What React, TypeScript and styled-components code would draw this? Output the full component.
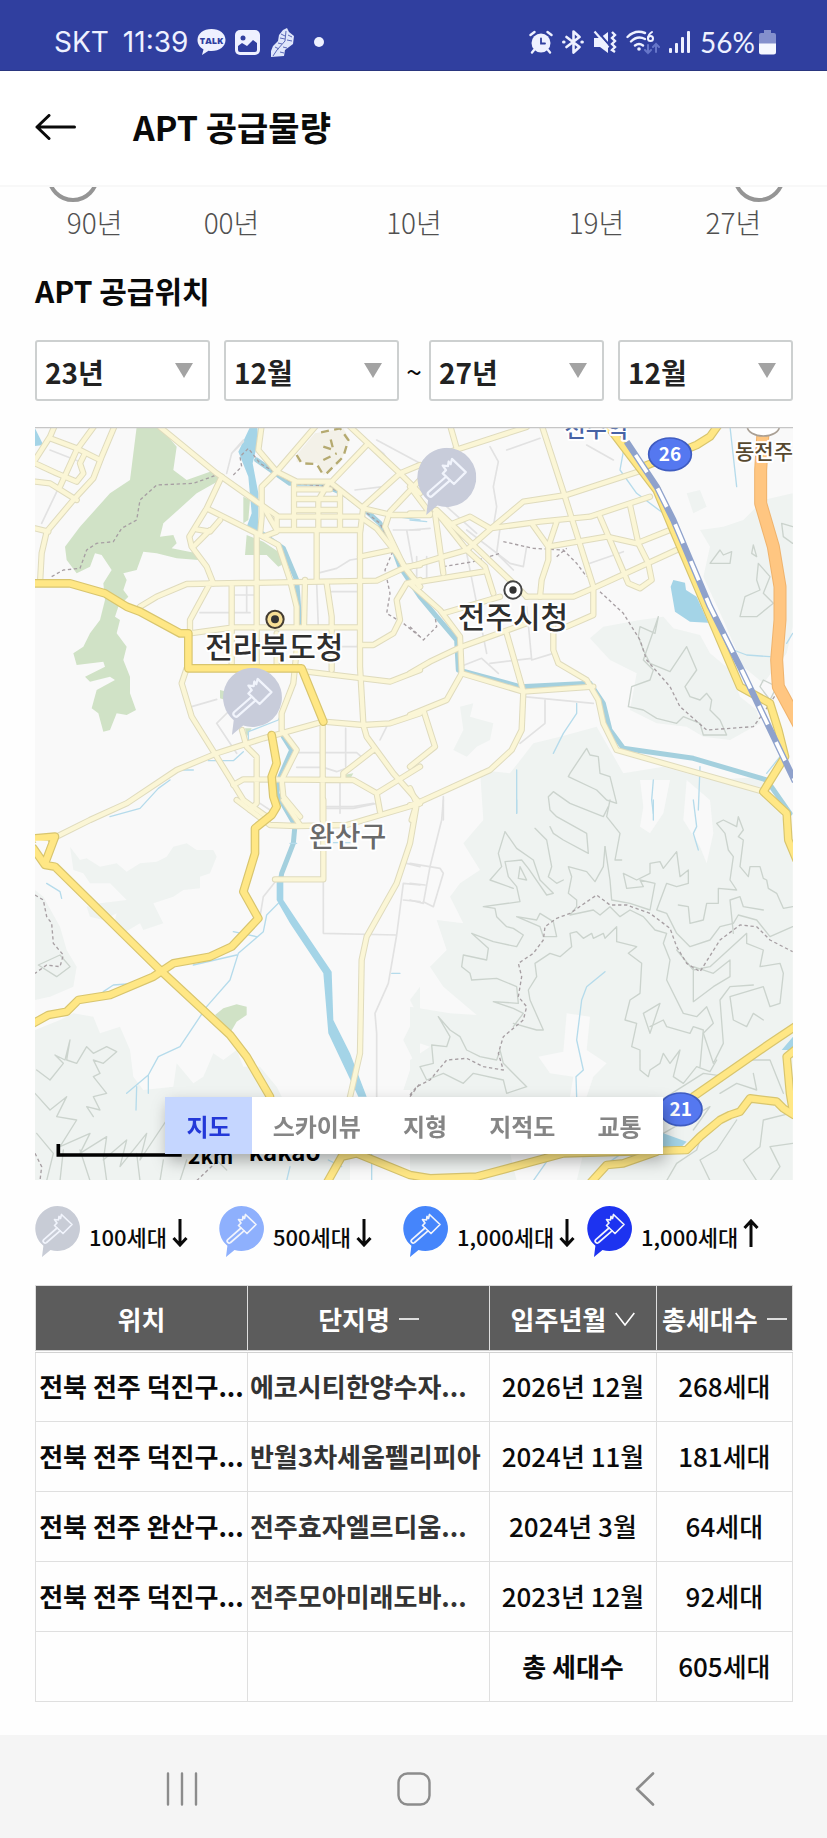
import React, { useState } from "react";
import styled, { createGlobalStyle } from "styled-components";

const GlobalStyle = createGlobalStyle`
  * { box-sizing: border-box; }
  body {
    margin: 0;
    background: #fefefe;
    color: #0a0a0a;
    font-family: "Noto Sans CJK KR", "Noto Sans", sans-serif;
  }
  button, select, input { font-family: inherit; }
`;

const Page = styled.div`
  display: flex;
  flex-direction: column;
  min-height: 100vh;
`;

/* ---------- status bar ---------- */

const StatusBar = styled.div`
  display: flex;
  align-items: center;
  justify-content: space-between;
  height: 71px;
  padding: 14px 51px 0 54px;
  background: #303f9f;
  border-bottom: 1px solid #2a367f;
  color: #eef1ff;
`;

const StatusGroup = styled.div<{ $gap: number }>`
  display: flex;
  align-items: center;
  gap: ${(p) => p.$gap}px;
`;

const StatusText = styled.span<{ $narrow?: boolean }>`
  font-family: ${(p) => (p.$narrow ? "Lato" : "Inter")}, "Noto Sans", sans-serif;
  font-size: 28px;
  line-height: 28px;
  white-space: nowrap;
`;

const TalkIcon = () => (
  <svg width="29" height="28" viewBox="0 0 29 28" aria-hidden="true">
    <path d="M14.5 1C6.5 1 .5 5.600 .5 12c0 4.200 2.500 7.500 6 9.400L5 27l6.500-4.300c1 .2 2 .3 3 .3 8 0 14-4.600 14-11S22.500 1 14.500 1z" fill="#eef1ff" />
    <text x="14.500" y="16" textAnchor="middle" fontSize="9" fontWeight="800" fontFamily="Open Sans, sans-serif" fill="#303f9f">TALK</text>
  </svg>
);

const PhotoIcon = () => (
  <svg width="25" height="25" viewBox="0 0 25 25" aria-hidden="true">
    <rect width="25" height="25" rx="5" fill="#eef1ff" />
    <circle cx="8" cy="8" r="2.500" fill="#303f9f" />
    <path d="M3 16l4-3 5 3 6-6 4 3v7q0 2-2 2H5q-2 0-2-2z" fill="#303f9f" />
  </svg>
);

const ShoeIcon = () => (
  <svg width="26" height="31" viewBox="0 0 26 31" aria-hidden="true">
    <path d="M14 3l4-2 2 4 5 4-1 8-8 6-1 6-13 1 0-6 2-5 5-5 1-6z" fill="#dfe6fb" />
    <path d="M17 4l-1 10-8 9-4 6M12 7l4 2M11 11l5 1M19 8l4 2M18 13l5 1M9 16l4 1M6 20l4 2M14 20l4 1M11 25l4 1" stroke="#5a68b8" strokeWidth="1" fill="none" />
  </svg>
);

const Dot = styled.span`
  width: 10px;
  height: 10px;
  margin-left: 10px;
  border-radius: 50%;
  background: #eef1ff;
`;

const AlarmIcon = () => (
  <svg width="24" height="24" viewBox="0 0 24 24" fill="none" stroke="#eef1ff" strokeWidth="2.400" strokeLinecap="round" aria-hidden="true">
    <circle cx="12" cy="13" r="9.500" fill="#eef1ff" stroke="none" />
    <path d="M1.500 5l4-3M22.500 5l-4-3M5 20l-2 2.500M19 20l2 2.500" />
    <path d="M12 8.500v5h4" stroke="#303f9f" strokeWidth="1.800" />
  </svg>
);

const BluetoothIcon = () => (
  <svg width="22" height="24" viewBox="0 0 22 24" fill="none" stroke="#eef1ff" strokeWidth="2.600" strokeLinejoin="round" strokeLinecap="round" aria-hidden="true">
    <path d="M4.500 7l13 10-6 5.500v-21l6 5.500-13 10" />
    <path d="M1.500 12h.6M19.800 12h.6" strokeWidth="3" />
  </svg>
);

const MuteIcon = () => (
  <svg width="24" height="24" viewBox="0 0 24 24" aria-hidden="true">
    <path d="M1 8h6l8-6v21l-8-6H1z" fill="#eef1ff" />
    <path d="M4 1l14 16" stroke="#303f9f" strokeWidth="2" />
    <path d="M1.500 1.500l14 16" stroke="#eef1ff" strokeWidth="2.200" />
    <path d="M19 2l3 3-3 3 3 3-3 3 3 3-3 3 3 2" fill="none" stroke="#eef1ff" strokeWidth="2.400" />
  </svg>
);

const WifiIcon = () => (
  <svg width="34" height="25" viewBox="0 0 34 25" fill="none" strokeLinecap="round" aria-hidden="true">
    <g stroke="#eef1ff" strokeWidth="2.400">
      <path d="M1.500 7C7 1.500 13 .8 19 3M5 11.500c4-4 9-5 14-2.500M9 15.500c2.500-2 5.500-2 8 0" />
      <path d="M26 2c-3 2-4 4-4 6.500" strokeWidth="2" />
      <circle cx="24.500" cy="8.500" r="2.500" strokeWidth="2" />
    </g>
    <circle cx="13" cy="19" r="1.800" fill="#eef1ff" />
    <path d="M22 15v8m-3-3l3 3 3-3M30 22v-8m-3 3l3-3 3 3" stroke="#6676c9" strokeWidth="2" />
  </svg>
);

const SignalIcon = () => (
  <svg width="22" height="24" viewBox="0 0 22 24" fill="#eef1ff" aria-hidden="true">
    <rect x="0" y="18" width="3" height="5" rx="1" />
    <rect x="6" y="13" width="3" height="10" rx="1" />
    <rect x="12" y="7" width="3" height="16" rx="1" />
    <rect x="18" y="1" width="3" height="22" rx="1" />
  </svg>
);

const BatteryIcon = () => (
  <svg width="17" height="25" viewBox="0 0 17 25" aria-hidden="true">
    <path d="M5 0h7v3h3q2 0 2 2v9H0V5q0-2 2-2h3z" fill="#8490cd" />
    <path d="M0 13.500h17V22q0 2.500-2.500 2.500h-12Q0 24.500 0 22z" fill="#f5f7ff" />
  </svg>
);

/* ---------- app bar ---------- */

const AppBar = styled.header`
  display: flex;
  align-items: center;
  gap: 57px;
  height: 116px;
  padding: 0 35px 2px;
  background: #fff;
  border-bottom: 2px solid #f8f8f8;
`;

const BackButton = styled.button`
  display: flex;
  padding: 0;
  border: 0;
  background: none;
`;

const Title = styled.h1`
  margin: 0;
  font-size: 34px;
  line-height: 50px;
  font-weight: 700;
`;

/* ---------- content ---------- */

const Content = styled.main`
  padding: 0 34px 33px 35px;
`;

const SliderStrip = styled.div`
  display: flex;
  align-items: flex-end;
  justify-content: space-between;
  height: 15px;
  padding: 0 8px 0 12px;
  overflow: hidden;
`;

const YearThumb = styled.input`
  appearance: none;
  flex: 0 1 50%;
  min-width: 0;
  height: 52px;
  margin: 0;
  background: none;
  &::-webkit-slider-thumb {
    appearance: none;
    width: 52px;
    height: 52px;
    border: 4px solid #959595;
    border-radius: 50%;
    background: #fff;
  }
`;

const YearScale = styled.div`
  display: grid;
  grid-template-columns: 1fr 2fr 2fr 2fr 1fr;
  padding: 0 14px;
  color: #505050;
  font-size: 28px;
  line-height: 40px;
  font-weight: 300;
  text-align: center;
`;

const SectionTitle = styled.h2`
  margin: 28px 0 30px;
  font-size: 30px;
  line-height: 40px;
  font-weight: 700;
`;

const FilterRow = styled.div`
  display: flex;
  align-items: center;
`;

const FilterPair = styled.div`
  flex: 1;
  display: flex;
  gap: 14px;
`;

const Tilde = styled.span`
  width: 30px;
  font-size: 28px;
  line-height: 28px;
  text-align: center;
`;

const SelectBox = styled.label`
  flex: 1;
  display: flex;
  align-items: center;
  min-width: 0;
  height: 61px;
  padding-right: 15px;
  border: 2px solid #cdd0d0;
  border-radius: 3px;
  background: #fff;
`;

const Select = styled.select`
  appearance: none;
  flex: 1;
  min-width: 0;
  height: 100%;
  padding: 2px 0 0 8px;
  border: 0;
  background: none;
  color: #222;
  font-size: 28px;
  font-weight: 700;
`;

const Caret = styled.span`
  border-left: 9px solid transparent;
  border-right: 9px solid transparent;
  border-top: 15px solid #a3a3a3;
`;

/* ---------- map ---------- */

const MapFrame = styled.section`
  position: relative;
  margin-top: 26px;
`;

const MapSvg = styled.svg`
  display: block;
  width: 100%;
  height: auto;
  background: #f9f9f9;
`;

const MapTabs = styled.div`
  position: absolute;
  right: 0;
  bottom: 26px;
  left: 0;
  display: flex;
  justify-content: center;
  filter: drop-shadow(3px 7px 8px rgba(0, 0, 0, 0.3));
`;

const MapTab = styled.button<{ $active: boolean }>`
  height: 57px;
  padding: 0 21px;
  border: 0;
  background: ${(p) => (p.$active ? "#c5d6ff" : "#fff")};
  color: ${(p) => (p.$active ? "#2338d8" : "#858585")};
  font-size: 24px;
  line-height: 36px;
  font-weight: 700;
`;

type Line = [number, number, string];

const E = 1140;

const lightRoads: Line[] = [
  [0, 0, "M390 21L560 160 680 245 745 290H990L1040 325 1100 400 1130 450 1170 500"],
  [0, 0, "M255 15L215 110 190 175 130 240 50 335 35 400 30 490"],
  [0, 0, "M75 15L60 50 15 120M60 55L140 85 210 120M15 130L80 160 140 185 160 160 150 130 165 100M15 185L60 190 140 240M195 15L140 90 90 200M15 325L55 335"],
  [0, 0, "M575 170L530 265 478 350 485 380 530 440 550 490M530 265L680 340 745 375 780 480M570 300L540 335 500 328M540 330L490 380"],
  [0, 0, "M330 560L380 530 470 492 1040 482 1130 440 1170 435M540 490L480 600V640L610 622H985M605 490V735M680 340V735"],
  [0, 0, "M695 15L685 90 740 155 695 200V290L690 345M860 15L740 155 800 185H905L1010 75M955 15L1110 160 1170 220M905 190L1000 265 1085 285H1200M1110 160L1000 260 990 340V740L1000 910"],
  [0, 0, "M1110 160L1170 135M1170 180L1080 275 1065 320 1120 435 1170 500M792 190V320M865 290V325M895 190L865 240V290M930 215V325M792 208H900M792 237H930M792 270H930M740 290V330H990M700 350L740 335M700 260L740 330"],
  [0, 0, "M860 330V482M990 410L1085 390M890 490L905 590V750M825 480L822 620M780 480L800 560V620M800 690L790 790 755 880V930L800 990 755 1080 760 1130 810 1190"],
  [0, 0, "M990 675H1030L1090 640 1110 600 1100 540 1130 490 1170 480M830 755L1080 785 1170 750M740 640V735"],
  [0, 0, "M470 745L455 790 485 890 560 1010 640 1140 710 1190M80 1250L180 1200 290 1150 440 1050 560 1000 700 955 880 905 1000 915 1080 910 1170 880"],
  [0, 0, "M636 930L650 980 680 1010V1150L660 1170M610 1095L640 1078 970 1080 1040 1120 1170 1040M878 905V1200M1000 915L1010 950 1090 1060 1170 1150M1030 990L940 1060V1080M1040 1120L1050 1175"],
  [E, 0, "M120 15L140 85M350 21L90 105M395 15L460 215 550 500V585L470 620M0 280H60L0 200M75 280L100 460M80 270L310 490 350 530M75 270L170 390 225 440 250 520"],
  [E, 0, "M130 310L180 290 240 325 390 305 540 290 720 230M700 150L470 225 340 245 250 320 170 390 100 410 0 440M0 490L220 455M440 305L415 380V420L395 480 390 530M365 310L415 380 590 350 680 370 780 330"],
  [E, 0, "M570 290L600 360 655 490 690 505 725 480 715 430 685 370 660 255M350 530H490L560 500 800 390M100 580L270 530M0 490L90 570 150 650 155 760 340 815 550 800"],
  [E, 0, "M0 760L60 725 155 680 350 610M290 640L340 815 335 930 305 990 240 1050 20 1150 0 1155M155 760L110 840 0 885M40 870L75 980 0 1040M430 620V690L445 730 530 780 565 840 580 910 620 990 1060 1115M0 1105L20 1150 5 1200"],
  [0, E, "M880 0V238H735M620 0L720 75 800 78 950 75 1170 10M1160 15L1140 130 1100 250 1010 410 995 480 990 760 958 900M760 0L810 75"],
];

const majorRoads: Line[] = [
  [0, 0, "M15 490H120L225 520 290 560 330 575 450 640H475V745H815L880 905"],
  [0, 0, "M725 945L740 1030 725 1070 730 1130 740 1160 725 1185 675 1225V1300L640 1415 685 1495 605 1580 540 1610 430 1630 370 1670 240 1725 145 1740 110 1775 55 1785 10 1810"],
  [0, E, "M10 145L45 195 75 200 390 510 600 705 650 770 720 890M15 115L75 110 45 190"],
  [0, E, "M890 1150L935 1070 980 1060 1140 1125 1200 1135 1340 1130 1600 1060 1970 1050 2010 1010 2070 960 2100 945 2130 935 2160 895 2240 905 2260 925 2292 945"],
  [E, 0, "M595 20L740 210 790 330 990 800 1080 850 1105 930 1125 1010 1060 1115 1130 1180 1135 1260 1160 1320"],
  [E, 0, "M700 140L860 75 900 50 925 15"],
  [E, E, "M540 1150L590 1095 640 1090 740 1055M850 890L1080 730 1155 680M1155 750L1130 770 1140 880 1150 940"],
];

const grayStreets: Line[] = [
  [0, 0, "M610 95L640 65M85 205L35 310M60 90L150 125M510 578H660M650 500V578M615 525H680M870 458L920 445 960 420 990 415M860 490L865 620M905 515H990M905 680H990M1010 60L1060 100 1080 130M590 160L605 100 640 60M975 210L1060 200M485 860L560 838M600 870L560 910 620 1000M800 998H980L1000 1015M800 1042H880L920 1055 960 1040M947 925V1040M1070 920L1050 960M930 1080V1180M890 1165H970L1040 1150M690 1150L720 1170M1040 60L1170 130M1090 330H1170M1130 330L1150 440"],
  [E, 0, "M240 80L265 125 250 200 260 260 250 320M170 330L300 430 340 440 350 380M270 325L260 400 310 450M390 305L440 300M110 260L200 340M0 330L60 325M20 410V480M50 410V480M170 400L230 700M350 560L365 720 430 700M240 730L365 715M150 740L215 715 265 760M340 830L550 850M405 840V910L330 970M540 430L640 395M100 1130V1200M530 75L610 120M290 90L390 55"],
  [0, E, "M740 240L700 290 690 350M880 240V400L1100 405 1120 250 1170 255M1120 300L1170 305M1100 405L1075 550 1035 640 1040 700 1040 890M890 20H970L1030 10M1130 190L1170 200"],
  [E, E, "M100 0L95 60 60 200 40 310 0 300M0 190L90 205 100 220 70 320 40 305M0 250L45 255"],
];

const hills: Line[] = [
  [E, 0, "M540 655L580 620 690 600 760 590 790 625 870 645 900 700 960 750 990 830 1040 870 1050 910 960 960 880 950 830 920 740 910 660 870 680 760 600 720Z"],
  [E, 0, "M870 330L940 320 1000 300 1060 240 1148 220V620L1130 700 1060 790 1000 740 940 600 880 470 900 380ZM830 220L870 210 890 260 850 280ZM150 860L190 850 180 890 250 910 240 960 200 980 170 1010 130 990 160 930Z"],
  [E, E, "M210 -90L300 -80 370 -170 450 -190 560 -220 600 -150 640 -80 760 -100 900 -60 1060 -70 1120 60 1148 180V1142H0V780L60 740 0 720 0 620 120 640 200 645 100 560 60 500 110 450 80 360 160 370 120 290 150 250 210 210 160 130 220 60Z"],
  [0, E, "M120 140L150 180 170 175 210 200 260 190 290 215 330 190 380 185 410 170 430 140 470 130 500 150 550 150 560 170 540 220 510 230 510 265 460 270 430 290 370 310 400 370 340 390 330 370 280 400 250 380 260 340 220 360 180 350 170 320 210 310 290 300 240 250 180 250 160 220 130 210ZM15 270L40 290 90 380 110 450 140 500 130 560 60 590 15 600ZM15 690L90 660 130 640 190 650 210 700 270 680 300 750 310 830 340 870 430 860 440 790 490 850 520 830 550 760 580 780 620 750 640 800 690 800 740 860 760 900H960V1142H15Z"],
  [0, E, "M1170 560L1140 600 1160 640 1120 720 1150 780 1120 870H1170Z"],
];

const valleys: Line[] = [
  [E, E, "M470 640L540 650 530 750 590 790 550 830 530 890H480L490 830 420 820 385 770 460 755Z"],
  [E, E, "M690 -60L700 20 690 80 720 100 760 40 780 -60ZM830 -60L820 60 870 140 890 190 910 100 900 0ZM300 1060L420 1000 520 1060 500 1142H320Z"],
];

const contours: Line[] = [
  [E, 0, "M745 590L735 640 690 620 685 650 700 690 720 730 780 755 830 680 860 750 825 800 840 830 870 840 890 820 905 840 900 870 930 900 950 945 880 945 870 910 820 890 800 910 740 895 700 870 655 860 665 800 720 780 730 750 700 720ZM930 390L900 430 960 430 965 395 940 405ZM1045 430L1040 480 1050 510 1005 530 990 590 1040 590 1090 550 1060 520 1080 470ZM1115 310L1120 350 1148 370M1115 310L1148 320M1030 375L1025 400 1040 410ZM1060 780L1100 800 1080 840 1050 800Z"],
  [E, 0, "M530 985L480 1060 475 1070 560 1110 590 1140 620 1150 600 1070 570 1060 565 1010 540 1005ZM430 1115L415 1130 420 1170 440 1190 530 1240 535 1300 460 1260 430 1240 420 1220M430 1115L480 1150 580 1190 595 1160"],
  [E, E, "M285 95L320 145 370 180 390 240 430 280 410 285 355 205 335 180 285 185 295 230 320 260 330 305 220 320 255 325 260 350 290 380 310 385 340 405 320 440 250 425 185 400 235 445 230 480 160 465 155 500 180 520 185 540 260 535 320 560 325 610 250 605 310 625 340 640 310 680M285 95L265 160 275 200 240 240 310 265"],
  [E, E, "M330 200L350 240 325 235ZM375 85L410 120 425 200 415 230 440 250 460 240M600 0L590 50 630 100 615 180 635 180M585 140L580 200 555 245 530 215 475 200 485 230 475 280 500 300 500 320 480 345 550 330 570 345 600 320 630 350 660 330 700 350 735 390 770 400 760 430 780 480 770 540 820 640 860 650 890 620 910 670 880 700 910 790 940 730 930 600 960 560 1030 555"],
  [E, E, "M585 140L600 240 605 300 660 310 720 330 735 250 690 240 700 260 650 265 640 220 680 240 720 220 720 190 750 185 760 205 800 155 810 230 835 210 835 250 800 260 770 250 740 330 770 340 800 400 840 440 900 420 930 380 970 370 985 345 1040 360 1080 410 1148 380"],
  [E, E, "M920 70L940 60 980 80 985 50 1000 90 985 110 1000 120 990 200 1015 230 1020 200 1050 200 1060 235 1070 240 1075 265 1100 280 1120 325 1148 320M920 70L945 100 955 150 970 170 960 240 980 270 925 265 925 310 890 310 880 360 840 370 835 320 805 315M320 350L380 360 390 340 430 365 440 410 400 410 390 380 320 350"],
  [E, E, "M480 400L500 395 520 415 545 400 550 415 580 400 585 415 620 380 620 425 680 440 655 460 695 490 690 580 660 600 645 660 680 670 665 740 690 750 690 810 715 830 720 810 750 790 760 760 780 790 810 750 790 830 820 850 860 800 900 815 920 780M480 400L485 440 450 470 420 460 375 490 380 530 355 570 360 600 400 690 380 690 310 670"],
  [E, E, "M700 640L750 610 720 700 700 640M720 680L760 660 770 680 840 700 850 680 880 690 870 800M850 500V605L910 560 960 530 960 480 910 520 850 500M800 450L850 510 900 500 1010 400 1010 430 1060 450 1050 500 1110 490 1120 520 1110 610 1080 620 1060 560 960 590 970 660 1010 680 1030 640 1060 660M970 400L960 300 990 290 1000 320 1060 330M85 650L120 690 150 710 170 750 210 770 260 780 270 750 280 790 320 830 350 860 290 880 280 840 190 820 160 850 100 820 50 840 30 800 70 790 65 735 110 740 120 710 85 650M930 880L980 850 1040 870 1030 820M770 890L880 820 950 830 1000 780 1080 780 1100 830 1120 880"],
  [E, E, "M880 990L860 1050 800 1090 770 1142M980 960L920 1050 870 1080 900 1142M1140 940L1060 960 1050 1040 1000 1080 1040 1142M1148 1030L1080 1040 1110 1100 1080 1142M760 1000L900 920 850 990"],
  [0, E, "M20 810L60 840 100 790 75 765 105 780 120 720 110 780 140 790 170 740 190 760 230 740 260 755 220 790 190 780 210 820 190 830 230 880 190 890 210 930 170 920 190 950M15 880L60 930 110 890 80 950 140 960 90 1040 180 1000 150 1060 230 1010 220 1080 290 1020 270 1100 350 1000 330 1080 410 960M20 1000L70 1060 50 1142M100 1050L90 1142M150 1050L180 1142M220 1070L230 1142M320 1060L330 1142M400 1080L390 1142M25 495L90 465 120 500 80 530ZM470 1080L450 1142M560 1080L590 1110"],
];

const trails: Line[] = [
  [0, 0, "M65 470L100 450 150 445 170 390 200 370 250 365 275 325 320 300 330 240 380 195 490 190 560 165"],
  [0, 0, "M610 165L635 140 630 110 655 85 690 130 790 190 900 200 960 240 1050 310 1090 390 1065 450 1080 520 1070 580 1120 610 1170 650"],
  [E, 0, "M280 365L370 385 460 390 500 430 530 470M100 440L190 425 270 400M440 410L470 385M570 515L640 580 690 660 710 720 780 800 810 860 890 930 960 925 1030 920 1060 880 1100 820M0 620L40 660 80 620 75 590"],
  [E, E, "M0 885L20 860 60 840 110 780 170 775 220 800 280 810 265 760 280 710 340 660 350 620 325 590 335 530 325 490 370 460 400 420 405 380 440 355 480 340 560 285 600 315 650 315 720 340 780 385 800 440 830 490 870 515 930 420 990 375 1040 380 1080 420 1148 455"],
  [0, E, "M15 285L40 300 50 350 65 370 70 430 100 465 90 500 50 495 15 520M15 1060L35 1100 30 1142M500 1142L560 1085M1140 890L1170 850"],
];

const rivers: Line[] = [
  [0, 0, "M695 340L760 385 800 480 810 620"],
  [0, 0, "M680 120L780 190 870 190 940 220 1000 265 1050 310 1090 385 1110 440 1170 530 1220 590 1280 660 1285 750 1470 800 1680 790 1720 850 1740 930 1780 985 1990 1015 2210 1080 2280 1180"],
  [0, 0, "M760 950L785 990 750 1070 740 1120 795 1215 790 1270 755 1360 750 1390"],
];

const streams: Line[] = [
  [0, 0, "M795 750L785 820 745 900 655 935 655 960M535 1022H610L640 995M460 1050H490M420 1080L385 1105 330 1165 240 1190M1010 270L1100 290 1170 300"],
  [E, 0, "M0 300L50 305M500 850L500 880 460 940 430 1000M640 95L630 150 680 220 760 280M960 20L980 200M970 690L1010 705 1080 710M1148 640L1130 670M870 1040L865 1170M320 1050V1180M730 1080L725 1140 730 1180M1070 1060L1110 1010"],
  [0, E, "M745 310L710 345 700 395 625 460 600 540 530 620 450 740 385 770 355 825 290 880M355 825V880M320 860L318 930M220 575L250 555 290 552M490 495L620 465M610 395L680 410M50 250L90 275 95 295M780 130H800M910 128H960M1085 520H1110M895 1080L935 1100M780 1100L770 1142M1025 1060V1142"],
  [E, E, "M850 0L860 80 850 100 865 150M585 515L530 560 515 600 500 720 520 810 498 830 500 890M320 0V40M730 0V60M370 1142L410 1085M600 1085L650 1050"],
];

const at = ([x, y]: Line) => (x || y ? `translate(${x} ${y})` : undefined);

const Strokes = ({ lines, color, width, dash, cap }: { lines: Line[]; color: string; width: number; dash?: string; cap?: "round" | "butt" }) => (
  <g fill="none" stroke={color} strokeWidth={width} strokeDasharray={dash} strokeLinejoin="round" strokeLinecap={cap ?? "round"}>
    {lines.map((l, i) => <path key={i} transform={at(l)} d={l[2]} />)}
  </g>
);

const Areas = ({ shapes, color }: { shapes: Line[]; color: string }) => (
  <g fill={color}>
    {shapes.map((s, i) => <path key={i} transform={at(s)} d={s[2]} />)}
  </g>
);

const BubbleShape = ({ color }: { color: string }) => (
  <g>
    <path d="M22.500 0a22.500 22.500 0 1 1-7 43.900L7 51l1.400-11.200A22.500 22.500 0 0 1 22.500 0z" fill={color} />
    <g fill="none" stroke="#f1f4fc" strokeWidth="1.700" strokeLinejoin="round" strokeLinecap="round">
      <path d="M26.500 8.500l-1 4-1.500-2-.5 3.500-4-.5 2.500 3.500-2.500 2.500 8.500 8 9-9z" />
      <path d="M22 22L8.800 33.600a2 2 0 0 0 2.800 2.900L25 24.800" />
    </g>
  </g>
);

const MapMarker = ({ x, y }: { x: number; y: number }) => (
  <svg x={x} y={y} width="178" height="202" viewBox="0 0 45 51">
    <BubbleShape color="#c8ccda" />
  </svg>
);

const RouteBadge = ({ x, y, label }: { x: number; y: number; label: string }) => (
  <g>
    <ellipse cx={x} cy={y} rx="64" ry="49" fill="#5578f0" stroke="#3f5cc0" strokeWidth="5" />
    <text x={x} y={y + 20} textAnchor="middle" fontSize="57" fontWeight="700" fill="#fff">{label}</text>
  </g>
);

const MapLabel = styled.text<{ $size: number; $color: string }>`
  font-size: ${(p) => p.$size}px;
  font-weight: 500;
  fill: ${(p) => p.$color};
  stroke: #fff;
  stroke-width: 12px;
  stroke-linejoin: round;
  paint-order: stroke;
  text-anchor: middle;
`;

const ScaleLabel = styled.text<{ $size: number }>`
  font-size: ${(p) => p.$size}px;
  font-weight: 700;
  text-anchor: middle;
`;

const CityMap = () => (
  <MapSvg viewBox="15 21 2274 2259" role="img" aria-label="전주시 지도">
    <Areas shapes={hills} color="#eff3f1" />
    <Areas shapes={valleys} color="#f9f9f9" />
    <path d="M320 21H390L440 80 430 150 470 180 555 150 580 175 500 220 400 310 390 350 430 345 440 370 425 385 500 400 505 420 440 415 380 400 340 395 320 450 280 460 290 480 280 510 295 530 265 560 255 590 270 600 260 640 290 680 280 720 300 770 300 820 318 870 290 885 260 880 240 930 220 935 205 880 185 865 200 810 255 780 240 770 180 785 165 770 225 740 220 725 140 735 130 700 160 680 180 640 210 600 225 540 220 490 245 450 215 405 195 400 180 440 140 460 110 420 105 380 150 320 240 220 300 180Z" fill="#d0e2c6" />
    <path d="M640 230L660 240 655 300 640 310ZM650 345L700 365 745 395 765 430 745 440 710 405 645 405ZM570 810L590 815 585 840 570 835ZM645 925L665 925 650 950ZM940 1065L970 1060 960 1078Z" fill="#d0e2c6" />
    <path d="M555 1785L580 1765 620 1753 650 1760V1785L620 1805 600 1840Z" fill="#d0e2c6" />
    <path d="M855 40L940 25 960 60 930 130 880 165 860 130 800 125 800 105Z" fill="#f3f1e8" />
    <path d="M800 105L815 130 860 132 880 165M890 160L940 110 955 60 930 25 860 40M880 80L910 90 900 50M880 120L920 100" fill="none" stroke="#b5aa70" strokeWidth="7" strokeDasharray="24 16" />
    <path d="M660 21L625 95 655 170 665 280 650 320 660 338 685 335V220L668 130 685 60 682 21ZM15 25L40 75 15 78Z" fill="#a4d4e7" />
    <Strokes lines={contours} color="#cbd3cd" width={4} />
    <Strokes lines={grayStreets} color="#e2e2e2" width={5} />
    <Strokes lines={rivers} color="#a4d0de" width={15} />
    <Strokes lines={streams} color="#b5dbeb" width={4} />
    <path d="M740 1380H760V1440L800 1500 905 1655 910 1800 960 1900 1010 2030H985L895 1840 880 1660 780 1510 740 1440Z" fill="#a4d4e7" />
    <path d="M1930 480L1965 488 1968 510 2000 530 2035 608 1980 605 1935 575 1922 500ZM1900 2140L1970 2165 1950 2185H1890ZM2255 1890L2289 1850V1890Z" fill="#a4d4e7" />
    <Strokes lines={trails} color="#a79fa3" width={4} dash="10 8" cap="butt" />
    <Strokes lines={lightRoads} color="#dfdbbd" width={19} />
    <Strokes lines={lightRoads} color="#fbf6d6" width={13} />
    <Strokes lines={majorRoads} color="#d8c56e" width={26} />
    <Strokes lines={majorRoads} color="#ffe785" width={19} />
    <path d="M15 1262L55 1262 40 1300Z" fill="#f9f9f9" />
    <g transform="translate(1140 0)" fill="none" strokeLinejoin="round">
      <path d="M1060 20L1052 150V250L1090 380 1110 500V600L1100 720 1105 800 1170 920" stroke="#efb36d" strokeWidth="39" />
      <path d="M1060 20L1052 150V250L1090 380 1110 500V600L1100 720 1105 800 1170 920" stroke="#ffc681" strokeWidth="33" />
      <path d="M650 65L740 200 790 300 900 560 1000 760 1155 1085" stroke="#8fa2cc" strokeWidth="19" />
      <path d="M660 80L740 200 790 300 900 560 1000 760 1155 1085" stroke="#fff" strokeWidth="11" strokeDasharray="62 58" strokeDashoffset="-30" />
    </g>
    <MapMarker x={578} y={743} />
    <MapMarker x={1161} y={83} />
    <circle cx="735" cy="598" r="26" fill="#f7df96" stroke="#443d33" strokeWidth="6" />
    <circle cx="735" cy="598" r="12" fill="#333" />
    <circle cx="1449" cy="510" r="26" fill="#fff" stroke="#444" strokeWidth="6" />
    <circle cx="1449" cy="510" r="11" fill="#333" />
    <MapLabel x="733" y="714" $size={90} $color="#2e2e2e">전라북도청</MapLabel>
    <MapLabel x="1449" y="625" $size={90} $color="#2e2e2e">전주시청</MapLabel>
    <MapLabel x="953" y="1281" $size={84} $color="#6a6a6a">완산구</MapLabel>
    <MapLabel x="1699" y="51" $size={69} $color="#4763a5">전주역</MapLabel>
    <ellipse cx="2200" cy="20" rx="48" ry="28" fill="#fff" stroke="#aaa095" strokeWidth="5" />
    <MapLabel x="2202" y="118" $size={63} $color="#57492f">동전주</MapLabel>
    <RouteBadge x={1920} y={103} label="26" />
    <RouteBadge x={1952} y={2068} label="21" />
    <path d="M85 2172V2205H455" fill="none" stroke="#000" strokeWidth="11" />
    <ScaleLabel x="542" y="2233" $size={63}>2km</ScaleLabel>
    <ScaleLabel x="764" y="2222" $size={72}>kakao</ScaleLabel>
    <path d="M15 23H2289" stroke="#c6c6c6" strokeWidth="4" />
  </MapSvg>
);

/* ---------- legend ---------- */

const Legend = styled.ul`
  display: grid;
  grid-template-columns: repeat(4, 1fr);
  margin: 26px 0 28px;
  padding: 0 22px 0 0;
  list-style: none;
`;

const LegendItem = styled.li`
  display: flex;
  align-items: center;
  gap: 9px;
  font-size: 22px;
  line-height: 32px;
  font-weight: 500;
  white-space: nowrap;
`;

const LegendText = styled.span`
  display: flex;
  align-items: center;
  gap: 5px;
  padding-top: 8px;
`;

const LegendBubble = ({ color }: { color: string }) => (
  <svg width="45" height="51" viewBox="0 0 45 51" aria-hidden="true">
    <BubbleShape color={color} />
  </svg>
);

const Arrow = styled.svg<{ $up: boolean }>`
  margin-top: -6px;
  rotate: ${(p) => (p.$up ? "180deg" : "0deg")};
`;

const LegendArrow = ({ up }: { up: boolean }) => (
  <Arrow $up={up} width="16" height="28" viewBox="0 0 16 28" fill="none" stroke="#0a0a0a" strokeWidth="3" role="img" aria-label={up ? "이상" : "이하"}>
    <path d="M8 0v26M1.500 19L8 26l6.500-7" />
  </Arrow>
);

const legendItems = [
  { color: "#c8ccd6", label: "100세대", up: false },
  { color: "#8eb0fd", label: "500세대", up: false },
  { color: "#4585fb", label: "1,000세대", up: false },
  { color: "#1d33f0", label: "1,000세대", up: true },
];

/* ---------- table ---------- */

const Table = styled.table`
  width: 100%;
  table-layout: fixed;
  border-collapse: collapse;
  font-size: 26px;
  line-height: 38px;
  font-weight: 700;
  text-align: center;
`;

const Th = styled.th<{ $width: number }>`
  width: ${(p) => p.$width}%;
  height: 66px;
  padding: 2px 0 0;
  border: 1px solid #dedede;
  border-bottom: 3px double #d2d2d2;
  background: #5c5c5c;
  background-clip: padding-box;
  color: #fff;
  font-weight: 700;
  white-space: nowrap;
`;

const SortButton = styled.button`
  display: inline-flex;
  align-items: center;
  gap: 9px;
  padding: 0;
  border: 0;
  background: none;
  color: inherit;
  font-size: inherit;
  line-height: inherit;
  font-weight: inherit;
`;

const Td = styled.td<{ $name?: boolean; $figure?: boolean }>`
  height: 70px;
  padding: 0 0 2px;
  border: 1px solid #dfdfdf;
  color: ${(p) => (p.$name ? "#333" : "#0a0a0a")};
  font-weight: ${(p) => (p.$figure ? 500 : 700)};
  white-space: nowrap;
`;

const CellText = styled.div<{ $start?: boolean }>`
  padding: 0 2px;
  text-align: ${(p) => (p.$start ? "left" : "center")};
`;

const SortMark = ({ down }: { down?: boolean }) => (
  <svg width="20" height="14" viewBox="0 0 20 14" fill="none" stroke="#fff" strokeWidth="1.600" aria-hidden="true">
    <path d={down ? "M.7 1l9.300 12L19.300 1" : "M0 7h20"} />
  </svg>
);

const rows = [
  ["전북 전주 덕진구...", "에코시티한양수자...", "2026년 12월", "268세대"],
  ["전북 전주 덕진구...", "반월3차세움펠리피아", "2024년 11월", "181세대"],
  ["전북 전주 완산구...", "전주효자엘르디움...", "2024년 3월", "64세대"],
  ["전북 전주 덕진구...", "전주모아미래도바...", "2023년 12월", "92세대"],
  ["", "", "총 세대수", "605세대"],
];

/* ---------- system navigation ---------- */

const NavBar = styled.nav`
  display: flex;
  align-items: center;
  height: 103px;
  margin-top: auto;
  padding: 4px 8% 0;
  background: #f5f5f5;
`;

const NavButton = styled.button`
  flex: 1;
  display: flex;
  justify-content: center;
  padding: 0;
  border: 0;
  background: none;
`;

const YearSelect = ({ label, value }: { label: string; value: string }) => (
  <SelectBox>
    <Select aria-label={label} defaultValue={value}>
      <option>{value}</option>
    </Select>
    <Caret />
  </SelectBox>
);

const mapModes = ["지도", "스카이뷰", "지형", "지적도", "교통"];

export default function App() {
  const [mode, setMode] = useState("지도");
  return (
    <Page>
      <GlobalStyle />
      <StatusBar>
        <StatusGroup $gap={9}>
          <StatusGroup $gap={14}>
            <StatusText>SKT</StatusText>
            <StatusText>11:39</StatusText>
          </StatusGroup>
          <TalkIcon />
          <PhotoIcon />
          <ShoeIcon />
          <Dot />
        </StatusGroup>
        <StatusGroup $gap={9}>
          <AlarmIcon />
          <BluetoothIcon />
          <MuteIcon />
          <WifiIcon />
          <SignalIcon />
          <StatusGroup $gap={4}>
            <StatusText $narrow>56%</StatusText>
            <BatteryIcon />
          </StatusGroup>
        </StatusGroup>
      </StatusBar>
      <AppBar>
        <BackButton aria-label="뒤로">
          <svg width="41" height="26" viewBox="0 0 41 26" fill="none" stroke="#0a0a0a" strokeWidth="3" strokeLinecap="round" strokeLinejoin="round">
            <path d="M39.500 13H2M14 1.500L2 13l12 11.500" />
          </svg>
        </BackButton>
        <Title>APT 공급물량</Title>
      </AppBar>
      <Content>
        <SliderStrip>
          <YearThumb type="range" aria-label="시작 연도" min={1990} max={2008} defaultValue={1990} />
          <YearThumb type="range" aria-label="종료 연도" min={2009} max={2027} defaultValue={2027} />
        </SliderStrip>
        <YearScale>
          {["90년", "00년", "10년", "19년", "27년"].map((y) => <span key={y}>{y}</span>)}
        </YearScale>
        <SectionTitle>APT 공급위치</SectionTitle>
        <FilterRow>
          <FilterPair>
            <YearSelect label="시작 연도" value="23년" />
            <YearSelect label="시작 월" value="12월" />
          </FilterPair>
          <Tilde>~</Tilde>
          <FilterPair>
            <YearSelect label="종료 연도" value="27년" />
            <YearSelect label="종료 월" value="12월" />
          </FilterPair>
        </FilterRow>
        <MapFrame>
          <CityMap />
          <MapTabs>
            {mapModes.map((m) => (
              <MapTab key={m} $active={m === mode} onClick={() => setMode(m)}>{m}</MapTab>
            ))}
          </MapTabs>
        </MapFrame>
        <Legend>
          {legendItems.map((item, i) => (
            <LegendItem key={i}>
              <LegendBubble color={item.color} />
              <LegendText>
                {item.label}
                <LegendArrow up={item.up} />
              </LegendText>
            </LegendItem>
          ))}
        </Legend>
        <Table>
          <thead>
            <tr>
              <Th $width={28}>위치</Th>
              <Th $width={32}><SortButton>단지명<SortMark /></SortButton></Th>
              <Th $width={22}><SortButton>입주년월<SortMark down /></SortButton></Th>
              <Th $width={18}><SortButton>총세대수<SortMark /></SortButton></Th>
            </tr>
          </thead>
          <tbody>
            {rows.map(([place, name, date, count], i) => (
              <tr key={i}>
                <Td><CellText>{place}</CellText></Td>
                <Td $name><CellText $start>{name}</CellText></Td>
                <Td $figure={/\d/.test(date)}><CellText>{date}</CellText></Td>
                <Td $figure><CellText>{count}</CellText></Td>
              </tr>
            ))}
          </tbody>
        </Table>
      </Content>
      <NavBar>
        <NavButton aria-label="최근 앱">
          <svg width="32" height="34" viewBox="0 0 32 34" stroke="#8c8c8c" strokeWidth="2.400" strokeLinecap="round"><path d="M2 1.500v31M16 1.500v31M30 1.500v31" /></svg>
        </NavButton>
        <NavButton aria-label="홈">
          <svg width="34" height="34" viewBox="0 0 34 34" fill="none" stroke="#8c8c8c" strokeWidth="2.400"><rect x="1.500" y="1.500" width="31" height="31" rx="9" /></svg>
        </NavButton>
        <NavButton aria-label="이전">
          <svg width="20" height="34" viewBox="0 0 20 34" fill="none" stroke="#8c8c8c" strokeWidth="2.600" strokeLinecap="round" strokeLinejoin="round"><path d="M18 1.500L2 17l16 15.500" /></svg>
        </NavButton>
      </NavBar>
    </Page>
  );
}
